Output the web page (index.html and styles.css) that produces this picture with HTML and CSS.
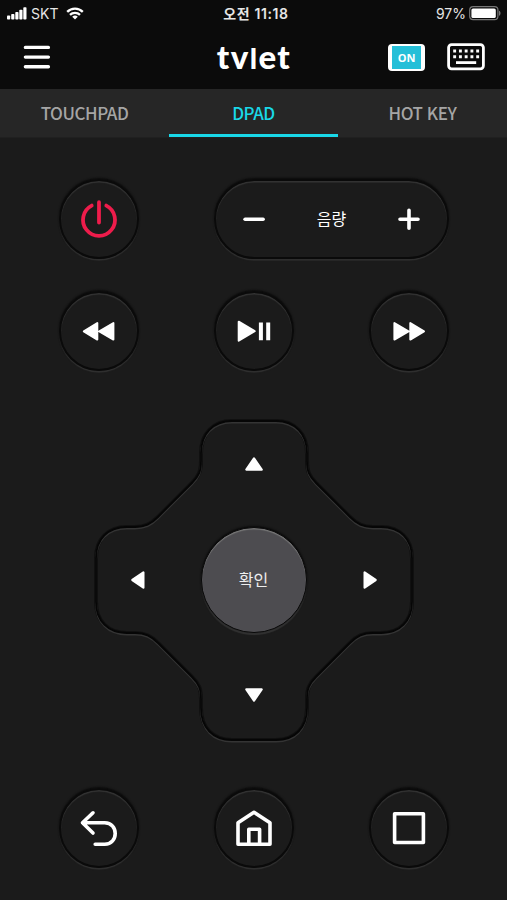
FILE: index.html
```html
<!DOCTYPE html>
<html lang="ko">
<head>
<meta charset="utf-8">
<title>tvlet</title>
<link rel="stylesheet" href="styles.css">
</head>
<body>
<div class="status">
  <div class="carrier">
    <svg width="20" height="13" viewBox="0 0 20 13" fill="#fff"><rect x="0" y="8.5" width="3.2" height="4" rx=".8"/><rect x="4.2" y="7" width="3.2" height="5.5" rx=".8"/><rect x="8.3" y="5" width="3.2" height="7.5" rx=".8"/><rect x="12.3" y="2.7" width="3.2" height="9.8" rx=".8"/><rect x="16.3" y=".2" width="3.2" height="12.3" rx=".8"/></svg>
    <span class="skt">SKT</span>
    <svg class="wifi" width="18" height="13" viewBox="0 0 18 13" fill="none" stroke="#fff" stroke-width="2.3"><path d="M1.2 4.9a11 11 0 0 1 15.6 0M4 7.9a7 7 0 0 1 10 0"/><path d="M9 12.4 6.2 9.8a4 4 0 0 1 5.6 0z" fill="#fff" stroke="none"/></svg>
  </div>
  <div class="time">오전 11:18</div>
  <div class="power">
    <span class="pct">97%</span>
    <svg width="32" height="15" viewBox="0 0 32 15"><rect x=".7" y=".7" width="28.2" height="13" rx="3.4" fill="none" stroke="#777" stroke-width="1.2"/><rect x="2.4" y="2.4" width="24.4" height="9.6" rx="1.6" fill="#fff"/><path d="M30 4.7c2 .6 2 4.4 0 5z" fill="#777"/></svg>
  </div>
</div>
<header class="bar">
  <svg class="menu" width="28" height="26" viewBox="0 0 28 26" stroke="#fff" stroke-width="3.4" stroke-linecap="round"><path d="M2.4 3.4h23M2.4 13.1h23M2.4 22.8h23"/></svg>
  <div class="logo">tv<span class="short">l</span>et</div>
  <div class="tools">
    <div class="on">ON</div>
    <svg width="38" height="28" viewBox="0 0 38 28"><rect x="1.6" y="1.6" width="34.8" height="24.2" rx="3" fill="none" stroke="#fff" stroke-width="2.8"/><path d="M6.2 8h26M6.2 13.8h26" stroke="#fff" stroke-width="2.9" stroke-dasharray="2.9 2.85"/><path d="M9 19.6h20.2" stroke="#fff" stroke-width="2.8"/></svg>
  </div>
</header>
<nav class="tabs">
  <div class="tab"><span>TOUCHPAD</span></div>
  <div class="tab active"><span>DPAD</span></div>
  <div class="tab"><span>HOT KEY</span></div>
</nav>
<main class="remote">
  <div class="row">
    <div class="key"><svg width="40" height="40" viewBox="0 0 40 40" fill="none" stroke="#ee1c4b" stroke-width="3.8" stroke-linecap="round"><path d="M20 3.2v20.3M12.7 6.6a16 16 0 1 0 14.6 0"/></svg></div>
    <div class="key volume">
      <svg width="40" height="40" viewBox="0 0 40 40" stroke="#fff" stroke-width="3.6" stroke-linecap="round"><path d="M11.1 20.3h18"/></svg>
      <span>음량</span>
      <svg width="40" height="40" viewBox="0 0 40 40" stroke="#fff" stroke-width="3.6" stroke-linecap="round"><path d="M11 20.3h18M20 11.3v18"/></svg>
    </div>
  </div>
  <div class="row media">
    <div class="key"><svg width="40" height="40" viewBox="0 0 40 40" fill="#fff" stroke="#fff" stroke-width="2" stroke-linejoin="round"><path d="M18.3 12v16.6L4.8 20.3zM34.4 12v16.6L20.3 20.3z"/></svg></div>
    <div class="key"><svg width="40" height="40" viewBox="0 0 40 40" fill="#fff" stroke="#fff" stroke-width="2" stroke-linejoin="round"><path d="M4.7 10.7v19l16-9.5z"/><path d="M26.9 11.4v17.8M34.2 11.4v17.8" stroke-width="4"/></svg></div>
    <div class="key"><svg width="40" height="40" viewBox="0 0 40 40" fill="#fff" stroke="#fff" stroke-width="2" stroke-linejoin="round"><path d="M5.4 12v16.6l14.1-8.3zM21.3 12v16.6L35 20.3z"/></svg></div>
  </div>
  <div class="dpad">
    <svg class="plate" width="330" height="330" viewBox="-165 -165 330 330">
      <defs><path id="pad" d="M-22 -159H22C41 -159 53 -146 53 -127V-119C53 -109 55 -104 62 -97L96 -63C103 -56 109 -53 119 -53H127C146 -53 158 -41 158 -22V22C158 41 146 53 127 53H119C109 53 103 56 96 63L62 97C55 104 53 109 53 119V128C53 148 41 160 22 160H-22C-41 160 -53 148 -53 128V119C-53 109 -55 104 -62 97L-96 63C-103 56 -109 53 -119 53H-127C-146 53 -158 41 -158 22V-22C-158 -41 -146 -53 -127 -53H-119C-109 -53 -103 -56 -96 -63L-62 -97C-55 -104 -53 -109 -53 -119V-127C-53 -146 -41 -159 -22 -159Z"/></defs>
      <use href="#pad" class="glow"/><use href="#pad" y="1.5" class="light"/><use href="#pad" class="groove"/>
    </svg>
    <svg class="up" width="20" height="18" viewBox="0 0 20 18"><path d="M10 3.3 17.7 14.6H2.3z"/></svg>
    <svg class="left" width="18" height="20" viewBox="0 0 18 20"><path d="M3.3 10 14.4 2.3v15.4z"/></svg>
    <div class="ok">확인</div>
    <svg class="right" width="18" height="20" viewBox="0 0 18 20"><path d="M14.7 10 3.6 2.3v15.4z"/></svg>
    <svg class="down" width="20" height="18" viewBox="0 0 20 18"><path d="M10 14.7 17.7 3.4H2.3z"/></svg>
  </div>
  <div class="row nav">
    <div class="key"><svg width="40" height="40" viewBox="0 0 40 40" fill="none" stroke="#fff" stroke-width="3.6" stroke-linecap="round" stroke-linejoin="round"><path d="M14 4.8 3.5 14.8 14 25M3.5 14.8h22.2c14 0 14 21.5 0 21.5H16.2"/></svg></div>
    <div class="key"><svg width="40" height="40" viewBox="0 0 40 40" fill="none" stroke="#fff" stroke-width="3.6" stroke-linejoin="round"><path d="M4 36.3V14.8L20 4.3l16 10.5v21.5zM14.8 36V21.2h10.8V36"/></svg></div>
    <div class="key"><svg width="40" height="40" viewBox="0 0 40 40" fill="none" stroke="#fff" stroke-width="3.6" stroke-linejoin="round"><path d="M5.6 5.7h28.8v28.8H5.6z"/></svg></div>
  </div>
</main>
</body>
</html>
```
FILE: styles.css
```css
* { box-sizing: border-box; }
body { margin: 0; width: 507px; height: 900px; overflow: hidden; background: #1b1b1b; color: #fff; font-family: "Liberation Sans", "Noto Sans CJK KR", sans-serif; }
svg { display: block; flex: none; }
.status { height: 28px; background: #0b0b0b; display: grid; grid-template-columns: 1fr auto 1fr; align-items: center; padding: 0 6px 1px 7px; color: #e6e6e6; font-family: Inter, "Noto Sans CJK KR", sans-serif; font-size: 14px; line-height: 20px; white-space: nowrap; }
.carrier, .power { display: flex; align-items: center; }
.skt { margin-left: 4px; letter-spacing: .1px; }
.wifi { margin-left: 7px; }
.time { font-weight: 600; font-size: 14px; letter-spacing: .6px; padding-left: 4px; }
.power { justify-content: flex-end; gap: 3px; }
.bar { height: 61px; background: #0b0b0b; display: grid; grid-template-columns: 1fr auto 1fr; align-items: center; padding: 0 22px 3px 23px; }
.logo { font: 900 33px/40px Lato, sans-serif; letter-spacing: 1.4px; }
.short { font-size: 29px; }
.tools { display: flex; justify-content: flex-end; gap: 22px; align-items: center; }
.on { width: 37px; height: 27px; border: solid #fff; border-width: 2px 4px; border-radius: 4px; background: #25bfd8; font: 700 11px/23px "Open Sans", sans-serif; text-align: center; }
.tabs { height: 49px; background: #262626; display: grid; grid-template-columns: repeat(3, 1fr); border-bottom: 1px solid #202020; }
.tab { display: flex; justify-content: center; color: #a5a5a5; font: 500 17px/47px "Noto Sans CJK KR", sans-serif; letter-spacing: -.45px; white-space: nowrap; }
.active { color: #19d8e8; box-shadow: inset 0 -3px #19d8e8; }
.remote { display: flex; flex-direction: column; align-items: center; padding-top: 41px; }
.row { width: 390px; display: flex; justify-content: space-between; }
.key { width: 80px; height: 80px; border-radius: 40px; display: flex; align-items: center; justify-content: center; border: 2px solid #0a0a0a; box-shadow: 0 -1px 2px #0a0a0a, 0 1.5px 1px #333, inset 0 1.5px 1px #343434; }
.volume { width: 235px; justify-content: space-between; padding: 0 17px 0 18px; font: 16px/24px "Noto Sans CJK KR", sans-serif; }
.volume span { padding-bottom: 2px; }
.media { margin-top: 32px; }
.dpad { position: relative; width: 330px; height: 330px; margin-top: 44px; display: grid; grid-template-columns: 1fr 106px 1fr; grid-template-rows: 1fr 106px 1fr; place-items: center; }
.plate { position: absolute; inset: 0; fill: none; }
.glow { stroke: #101010; stroke-width: 4; }
.light { stroke: #343434; stroke-width: 2; }
.groove { stroke: #060606; stroke-width: 1.8; }
.up, .left, .right, .down { fill: #fff; stroke: #fff; stroke-width: 2.2; stroke-linejoin: round; position: relative; }
.up { grid-area: 1 / 2; align-self: start; margin-top: 40px; }
.left { grid-area: 2 / 1; justify-self: start; margin-left: 40px; }
.right { grid-area: 2 / 3; justify-self: end; margin-right: 40px; }
.down { grid-area: 3 / 2; align-self: end; margin-bottom: 41px; }
.ok { grid-area: 2 / 2; position: relative; width: 106px; height: 106px; border-radius: 50%; border: 1.5px solid #090909; background: #4d4c50; box-shadow: 0 -1px 2px #090909, 0 2px 1px #333, inset 0 1.5px 1px #777; font: 16px/103px "Noto Sans CJK KR", sans-serif; text-align: center; color: #eee; }
.nav { margin-top: 43px; }
```
